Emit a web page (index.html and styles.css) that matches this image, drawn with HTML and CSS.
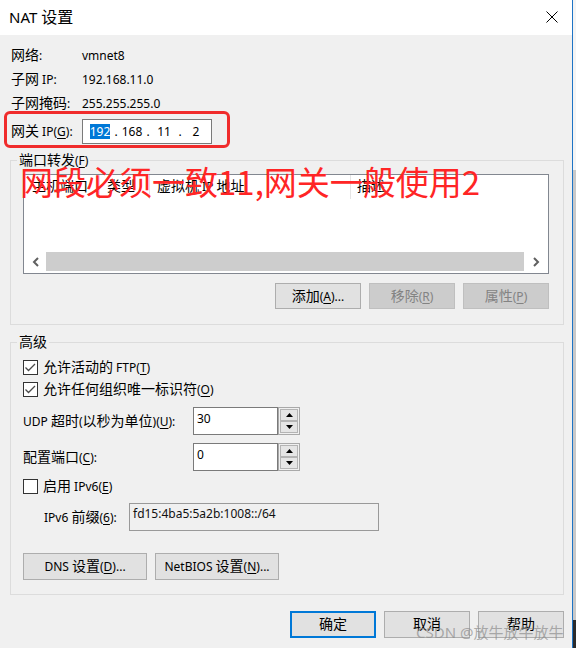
FILE: index.html
```html
<!DOCTYPE html>
<html lang="zh-CN">
  <head>
    <meta charset="UTF-8" />
    <meta name="viewport" content="width=device-width, initial-scale=1.0" />
    <title>NAT 设置</title>
    <link rel="stylesheet" href="styles.css">
  </head>
  <body>
    <div class="dialog">
      <div class="titlebar">
        <span class="title">NAT <span class="zh">设置</span></span>
        <svg class="close" width="12" height="12" viewBox="0 0 12 12">
          <path d="M0.5 0.5L11.5 11.5M11.5 0.5L0.5 11.5" stroke="#000" stroke-width="1" />
        </svg>
      </div>

      <div class="content">
        <div class="info">
          <span><span class="zh">网络</span>:</span><span>vmnet8</span>
          <span><span class="zh">子网</span> IP:</span><span>192.168.11.0</span>
          <span><span class="zh">子网掩码</span>:</span><span>255.255.255.0</span>
        </div>

        <div class="gateway">
          <span class="label"><span class="zh">网关</span> IP(<u>G</u>):</span>
          <div class="ipbox">
            <span class="ip-field"><span class="sel">192</span></span>
            <span class="ip-dot">.</span>
            <span class="ip-field">168</span>
            <span class="ip-dot">.</span>
            <span class="ip-field">11</span>
            <span class="ip-dot">.</span>
            <span class="ip-field">2</span>
          </div>
        </div>

        <fieldset class="group ports">
          <legend><span class="zh">端口转发</span>(<u>F</u>)</legend>
          <div class="listview">
            <div class="lv-head">
              <span class="col-port"><span class="zh">主机端口</span></span>
              <span class="col-type"><span class="zh">类型</span></span>
              <span class="col-ip"><span class="zh">虚拟机</span> IP <span class="zh">地址</span></span>
              <span class="col-desc"><span class="zh">描述</span></span>
            </div>
            <div class="lv-body"></div>
            <div class="hscroll">
              <span class="arrow">
                <svg width="7" height="10" viewBox="0 0 7 10"><path d="M6 1L2 5L6 9" fill="none" stroke="#606060" stroke-width="2" /></svg>
              </span>
              <span class="thumb"></span>
              <span class="arrow right">
                <svg width="7" height="10" viewBox="0 0 7 10"><path d="M1 1L5 5L1 9" fill="none" stroke="#606060" stroke-width="2" /></svg>
              </span>
            </div>
          </div>
          <div class="btn-row">
            <button class="btn"><span class="zh">添加</span>(<u>A</u>)...</button>
            <button class="btn" disabled><span class="zh">移除</span>(<u>R</u>)</button>
            <button class="btn" disabled><span class="zh">属性</span>(<u>P</u>)</button>
          </div>
        </fieldset>

        <fieldset class="group advanced">
          <legend><span class="zh">高级</span></legend>
          <label class="check">
            <span class="box"><svg width="13" height="13" viewBox="0 0 13 13"><path d="M1.5 6.5L4.5 9.5L11 3" fill="none" stroke="#4a4a4a" stroke-width="1.3" /></svg></span>
            <span><span class="zh">允许活动的</span> FTP(<u>T</u>)</span>
          </label>
          <label class="check">
            <span class="box"><svg width="13" height="13" viewBox="0 0 13 13"><path d="M1.5 6.5L4.5 9.5L11 3" fill="none" stroke="#4a4a4a" stroke-width="1.3" /></svg></span>
            <span><span class="zh">允许任何组织唯一标识符</span>(<u>O</u>)</span>
          </label>

          <div class="field-row udp">
            <span class="field-label">UDP <span class="zh">超时</span>(<span class="zh">以秒为单位</span>)(<u>U</u>):</span>
            <div class="spin">
              <div class="spin-input">30</div>
              <div class="spin-btns">
                <span><svg width="7" height="4" viewBox="0 0 7 4"><path d="M3.5 0L7 4H0Z" /></svg></span>
                <span><svg width="7" height="4" viewBox="0 0 7 4"><path d="M0 0H7L3.5 4Z" /></svg></span>
              </div>
            </div>
          </div>

          <div class="field-row port">
            <span class="field-label"><span class="zh">配置端口</span>(<u>C</u>):</span>
            <div class="spin">
              <div class="spin-input">0</div>
              <div class="spin-btns">
                <span><svg width="7" height="4" viewBox="0 0 7 4"><path d="M3.5 0L7 4H0Z" /></svg></span>
                <span><svg width="7" height="4" viewBox="0 0 7 4"><path d="M0 0H7L3.5 4Z" /></svg></span>
              </div>
            </div>
          </div>

          <label class="check ipv6">
            <span class="box"></span>
            <span><span class="zh">启用</span> IPv6(<u>E</u>)</span>
          </label>

          <div class="prefix-row">
            <span class="field-label">IPv6 <span class="zh">前缀</span>(<u>6</u>):</span>
            <div class="textbox">fd15:4ba5:5a2b:1008::/64</div>
          </div>

          <div class="btn-row start">
            <button class="btn wide">DNS <span class="zh">设置</span>(<u>D</u>)...</button>
            <button class="btn wide">NetBIOS <span class="zh">设置</span>(<u>N</u>)...</button>
          </div>
        </fieldset>

        <div class="footer">
          <button class="btn default"><span class="zh">确定</span></button>
          <button class="btn"><span class="zh">取消</span></button>
          <button class="btn"><span class="zh">帮助</span></button>
        </div>
      </div>

      <!-- annotations drawn over the screenshot -->
      <div class="annot-box"></div>
      <div class="annot-text">网段必须一致11,网关一般使用2</div>
      <div class="watermark">CSDN @放牛放牛放牛</div>
    </div>
    <div class="edge"></div>
  </body>
</html>
```

FILE: styles.css
```css
body {
  margin: 0;
  display: flex;
  height: 648px;
  overflow: hidden;
  font-family: "Noto Sans", "Noto Sans CJK SC", sans-serif;
  font-size: 12px;
  color: #000;
  background: #f0f0f0;
}

.zh {
  font-family: "Noto Sans CJK SC", sans-serif;
  font-size: 14px;
  line-height: 1;
}

u {
  text-decoration-thickness: 1px;
  text-underline-offset: 2px;
}

.dialog {
  position: relative;
  width: 572px;
  flex: none;
  background: #f0f0f0;
}

.edge {
  flex: 1;
  border-left: 1px solid #1e74c6;
  background: linear-gradient(#f4f4f4 0 170px, #c9c9c9 170px 620px, #2b2b2b 620px);
}

/* title bar */
.titlebar {
  height: 35px;
  box-sizing: border-box;
  background: #fff;
  display: flex;
  align-items: center;
  justify-content: space-between;
  padding: 0 14px 2px 9px;
}
.title {
  font-size: 15px;
}
.title .zh {
  font-size: 16px;
}
.close {
  display: block;
  margin-top: 1px;
}

.content {
  padding: 8px 8px 0 10px;
}

/* network info */
.info {
  display: grid;
  grid-template-columns: 71px auto;
  grid-auto-rows: 24px;
  align-items: center;
  padding-left: 1px;
}

.gateway {
  display: flex;
  align-items: center;
  height: 25px;
  margin-top: 4px;
  padding-left: 1px;
}
.gateway .label {
  width: 71px;
}
.ipbox {
  width: 130px;
  height: 25px;
  box-sizing: border-box;
  border: 1px solid #7a7a7a;
  background: #fff;
  display: flex;
  align-items: center;
  padding-left: 6px;
}
.ip-field {
  width: 22px;
  text-align: center;
}
.ip-dot {
  width: 10px;
  text-align: center;
}
.sel {
  display: inline-block;
  background: #0078d7;
  color: #fff;
  line-height: 15px;
}

/* group boxes */
.group {
  margin: 8px 0 0;
  border: 1px solid #dcdcdc;
  min-width: 0;
}
.group legend {
  padding: 0 2px;
  margin-left: -6px;
  line-height: 16px;
}
.ports {
  padding: 5px 14px 15px 12px;
}
.advanced {
  margin-top: 9px;
  padding: 5px 14px 14px 12px;
}

/* list view */
.listview {
  height: 100px;
  box-sizing: border-box;
  border: 1px solid #828790;
  background: #fff;
  display: flex;
  flex-direction: column;
}
.lv-head {
  height: 24px;
  display: flex;
  flex: none;
}
.lv-head > span {
  box-sizing: border-box;
  border-right: 1px solid #e5e5e5;
  line-height: 24px;
  padding-left: 7px;
  white-space: nowrap;
}
.col-port {
  width: 76px;
  padding-left: 8px !important;
}
.col-type {
  width: 50px;
}
.col-ip {
  width: 201px;
}
.col-desc {
  flex: 1;
  border-right: none !important;
  padding-left: 6px !important;
}
.lv-body {
  flex: 1;
}
.hscroll {
  height: 19px;
  margin-bottom: 2px;
  display: flex;
  flex: none;
}
.hscroll .arrow {
  width: 22px;
  display: flex;
  align-items: center;
  justify-content: center;
}
.hscroll .arrow.right {
  width: 24px;
}
.hscroll .thumb {
  flex: 1;
  background: #cdcdcd;
}

/* buttons */
.btn-row {
  display: flex;
  justify-content: flex-end;
  gap: 8px;
  margin-top: 9px;
}
.btn-row.start {
  justify-content: flex-start;
  margin-top: 22px;
}
.btn {
  width: 86px;
  height: 26px;
  box-sizing: border-box;
  padding: 0;
  border: 1px solid #adadad;
  background: #e1e1e1;
  color: #000;
  font: inherit;
  white-space: nowrap;
}
.btn:disabled {
  background: #cccccc;
  border-color: #bfbfbf;
  color: #838383;
}
.btn.wide {
  width: 124px;
  height: 27px;
}

/* advanced options */
.check {
  display: flex;
  align-items: center;
  height: 22px;
}
.check .box {
  width: 15px;
  height: 15px;
  box-sizing: border-box;
  border: 1px solid #333;
  background: #fff;
  margin-right: 5px;
  display: flex;
}
.check.ipv6 {
  margin-top: 4px;
}

.field-row {
  display: flex;
  align-items: center;
  height: 28px;
}
.field-row.udp {
  margin-top: 7px;
}
.field-row.port {
  margin-top: 8px;
}
.field-label {
  width: 170px;
  white-space: nowrap;
}
.spin {
  display: flex;
  height: 28px;
}
.spin-input {
  width: 85px;
  box-sizing: border-box;
  border: 1px solid #7a7a7a;
  background: #fff;
  padding: 3px 0 0 3px;
  line-height: 16px;
}
.spin-btns {
  width: 22px;
  box-sizing: border-box;
  border: 1px solid #a9a9a9;
  padding: 1px;
  display: flex;
  flex-direction: column;
}
.spin-btns span {
  flex: 1;
  border: 1px solid #b4b4b4;
  background: #e5e5e5;
  display: flex;
  align-items: center;
  justify-content: center;
}
.spin-btns svg {
  display: block;
}

.prefix-row {
  display: flex;
  align-items: center;
  height: 28px;
  margin-top: 6px;
  padding-left: 21px;
}
.prefix-row .field-label {
  width: 85px;
}
.textbox {
  width: 250px;
  height: 28px;
  box-sizing: border-box;
  border: 1px solid #999;
  background: #f0f0f0;
  padding: 2px 0 0 3px;
  line-height: 16px;
  color: #111;
}

/* dialog footer */
.footer {
  display: flex;
  justify-content: flex-end;
  gap: 8px;
  margin-top: 16px;
}
.footer .btn {
  height: 27px;
}
.btn.default {
  border: 2px solid #0078d7;
}

/* screenshot annotations */
.annot-box {
  position: absolute;
  left: 4px;
  top: 111px;
  width: 226px;
  height: 37px;
  box-sizing: border-box;
  border: 3px solid #f02c2c;
  border-radius: 6px;
}
.annot-text {
  position: absolute;
  left: 20px;
  top: 165px;
  font-family: "Noto Sans CJK SC", sans-serif;
  font-size: 33px;
  line-height: 33px;
  color: #ff2525;
  white-space: nowrap;
}
.watermark {
  position: absolute;
  left: 416px;
  top: 622px;
  font-family: "Noto Sans", "Noto Sans CJK SC", sans-serif;
  font-size: 15px;
  line-height: 20px;
  color: rgba(140, 140, 140, 0.7);
  white-space: nowrap;
}
```
